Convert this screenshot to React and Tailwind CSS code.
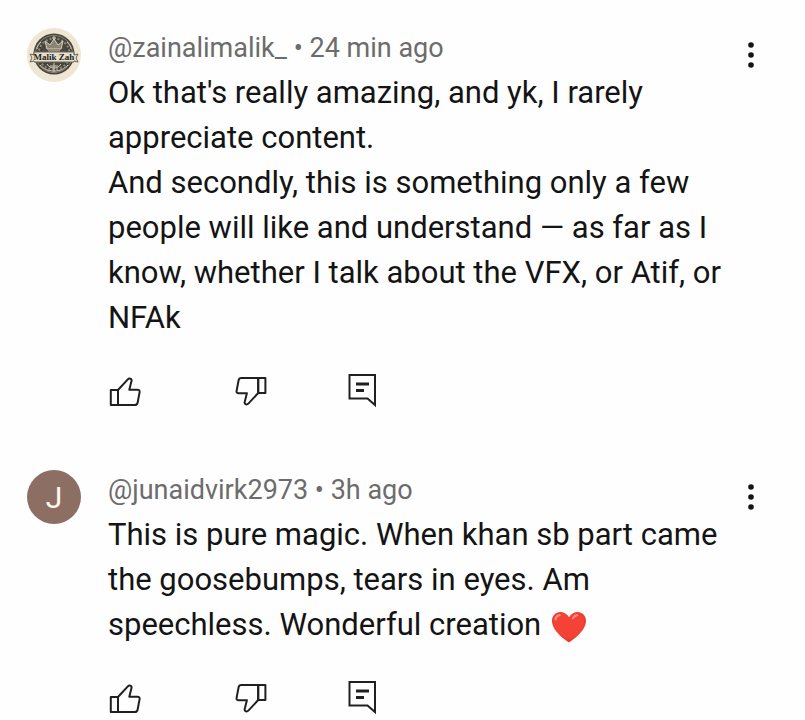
import { useId } from "react";

const comments = [
  {
    id: 1,
    author: "@zainalimalik_",
    time: "24 min ago",
    avatar: <CrestAvatar />,
    text: [
      "Ok that's really amazing, and yk, I rarely appreciate content.",
      "And secondly, this is something only a few people will like and understand — as far as I know, whether I talk about the VFX, or Atif, or NFAk",
    ],
  },
  {
    id: 2,
    author: "@junaidvirk2973",
    time: "3h ago",
    avatar: <LetterAvatar letter="J" />,
    text: [
      "This is pure magic. When khan sb part came the goosebumps, tears in eyes. Am speechless. Wonderful creation",
    ],
    heart: true,
  },
];

export default function App() {
  return (
    <main className="min-h-screen bg-[#fefefe] pt-7 pr-9 pl-[27px] font-[Roboto,sans-serif] text-[#141414]">
      <div className="flex flex-col gap-[62px]">
        {comments.map((comment) => (
          <Comment key={comment.id} comment={comment} />
        ))}
      </div>
    </main>
  );
}

function Comment({ comment }) {
  return (
    <article className="flex items-start">
      <div className="mr-[27px] h-[54px] w-[54px] shrink-0">
        {comment.avatar}
      </div>
      <div className="min-w-0 flex-1">
        <header className="pt-1 text-[27px] leading-8 text-[#6c6c6c]">
          <a href="#profile">{comment.author}</a> • {comment.time}
        </header>
        <div className="pt-1.5 text-[31px] leading-[45px]">
          {comment.text.map((line, i) => (
            <p key={i}>
              {line}
              {comment.heart && <Heart />}
            </p>
          ))}
        </div>
        <div className="flex pt-[34px]">
          <button aria-label="Like" className="mr-[92px]">
            <ThumbUp />
          </button>
          <button aria-label="Dislike" className="mr-[78px]">
            <ThumbDown />
          </button>
          <button aria-label="Reply">
            <Reply />
          </button>
        </div>
      </div>
      <button aria-label="More options" className="mt-3">
        <Dots />
      </button>
    </article>
  );
}

function LetterAvatar({ letter }) {
  return (
    <div className="flex h-full w-full items-center justify-center rounded-full bg-[#8d6e63] text-[30px] text-[#fff8f0]">
      {letter}
    </div>
  );
}

function CrestAvatar() {
  return (
    <svg viewBox="0 0 54 54" className="h-full w-full">
      <circle cx="27" cy="27" r="27" fill="#eee5d3" />
      <circle cx="27" cy="26" r="20.5" fill="#47443d" />
      <circle cx="27" cy="26" r="18.5" fill="none" stroke="#8b8678" />
      <circle
        cx="27"
        cy="26"
        r="15.5"
        fill="none"
        stroke="#8f8a7b"
        strokeWidth="2"
        strokeDasharray="2 2"
      />
      <circle cx="27" cy="26" r="12" fill="#4d4a42" />
      <g fill="none" stroke="#d8d0bd" strokeWidth="1">
        <path
          d="M20 21l-2-8 5 4 4-6 4 6 5-4-2 8z"
          fill="#8a8575"
        />
        <path d="M21 23h12M27 8v4M25 10h4" />
        <path d="M14 14c-3 3-4 5-4 7M40 14c3 3 4 5 4 7M13 37c4 4 8 6 14 6s10-2 14-6M20 36c2 3 4 4 7 4s5-1 7-4M27 35v9M23 38h8" />
      </g>
      <path
        d="M3 26l4 1v-3h40v3l4-1-2 4 2 4-4-1v1H7v-1l-4 1 2-4z"
        fill="#e8dfcd"
        stroke="#6b675b"
        strokeWidth="1"
      />
      <text
        x="27"
        y="32"
        textAnchor="middle"
        fill="#222"
        fontFamily="Liberation Serif, serif"
        fontSize="9"
        fontWeight="700"
      >
        Malik Zah
      </text>
    </svg>
  );
}

function ThumbUp() {
  return (
    <svg
      viewBox="0 0 34 34"
      className="block h-[34px] w-[34px]"
      fill="none"
      stroke="#202020"
      strokeWidth="2"
      strokeLinejoin="round"
    >
      <path d="M2.8 16H10v15H2.8z" />
      <path d="M10 16l9.6-10.400c.9-1 1.700-1.300 2.700-1 1.100.4 1.500 1.300 1.200 2.500l-2.200 8.600h8.200c1.600 0 2.400.9 2.100 2.400l-2 10.600c-.3 1.500-1.200 2.300-2.700 2.300H10z" />
    </svg>
  );
}

function ThumbDown() {
  return (
    <svg
      viewBox="0 0 34 34"
      className="block h-[34px] w-[34px]"
      fill="none"
      stroke="#202020"
      strokeWidth="2"
      strokeLinejoin="round"
    >
      <path d="M24.200 4h7.200v15h-7.200z" />
      <path d="M24.200 19l-9.600 10.400c-.9 1-1.700 1.300-2.700 1-1.100-.4-1.500-1.300-1.200-2.500l2.200-8.600H4.700c-1.600 0-2.400-.9-2.100-2.400l2-10.600C4.900 4.800 5.800 4 7.300 4h16.900z" />
    </svg>
  );
}

function Reply() {
  return (
    <svg
      viewBox="0 0 34 34"
      className="block h-[34px] w-[34px]"
      fill="none"
      stroke="#202020"
    >
      <path d="M3.500 1H29v30l-7.500-6.500h-18z" strokeWidth="2" />
      <path d="M10 10h13M10 16.500h8" strokeWidth="3" />
    </svg>
  );
}

function Dots() {
  return (
    <svg viewBox="0 0 36 32" className="block h-8 w-9" fill="#141414">
      <circle cx="18" cy="5" r="2.800" />
      <circle cx="18" cy="15" r="2.800" />
      <circle cx="18" cy="25" r="2.800" />
    </svg>
  );
}

function Heart() {
  const id = useId();
  return (
    <svg
      viewBox="0 0 36 32"
      className="ml-2.5 inline-block h-8 w-9 align-middle"
      role="img"
      aria-label="red heart"
    >
      <defs>
        <radialGradient id={id} cx="0.5" cy="0.4" r="0.65">
          <stop offset="0.6" stopColor="#f44336" />
          <stop offset="1" stopColor="#d9372d" />
        </radialGradient>
      </defs>
      <path
        d="M18 31.500C13 28 1 19.500 1 9.700 1 4.500 4.800 1 9.300 1c3.800 0 6.900 2 8.700 5.300C19.800 3 22.900 1 26.700 1 31.200 1 35 4.500 35 9.700 35 19.500 23 28 18 31.500z"
        fill={`url(#${id})`}
      />
      <path
        d="M4.500 8.500c.5-2.500 2-4 4.300-4.300M22 7c1-1.500 2.300-2.500 4-2.800"
        stroke="#ff8a80"
        strokeWidth="2.200"
        strokeLinecap="round"
        fill="none"
      />
    </svg>
  );
}
